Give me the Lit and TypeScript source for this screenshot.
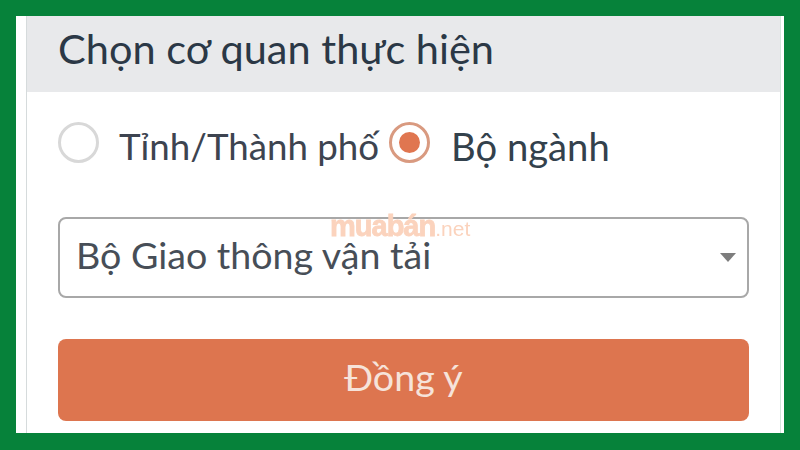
import { LitElement, html, css } from "lit";
import { customElement } from "lit/decorators.js";

@customElement("app-root")
export class AppRoot extends LitElement {
  static styles = css`
    :host { display: block; width: 800px; height: 450px; }
    .frame { box-sizing: border-box; width: 800px; height: 450px; background: #fff; border: solid #06823a; border-width: 16px 16px 17px 16px; display: flex; padding: 0 3px 0 10px; font-family: "Lato", sans-serif; position: relative; }
    .panel { flex: 1; display: flex; flex-direction: column; color: #3d4450; border-left: 1px solid #d6dbdc; border-right: 1px solid #d5e6dc; }
    .head { height: 76px; background: #e8e9eb; display: flex; align-items: center; padding: 0 0 13px 31px; font-size: 41.5px; color: #2b3846; box-sizing: border-box; }
    .body { padding: 0 31px; flex: 1; display: flex; flex-direction: column; }
    .radios { display: flex; align-items: center; margin-top: 30px; height: 41px; font-size: 36.7px; }
    .radio { width: 41px; height: 41px; box-sizing: border-box; border-radius: 50%; border: 3px solid #d8d8d8; flex: none; background: #fff; }
    .radio.on { border-color: #d99a80; display: flex; align-items: center; justify-content: center; }
    .radio.on::after { content: ""; width: 21px; height: 21px; border-radius: 50%; background: #e07650; }
    .l1 { margin-left: 20px; margin-right: 10px; padding-top: 7px; }
    .l2 { margin-left: 21px; font-size: 38.2px; color: #33414c; padding-top: 7px; }
    .select { margin-top: 54px; height: 81px; box-sizing: border-box; border: 2.5px solid #a8a8a8; border-radius: 8px; display: flex; align-items: center; padding: 0 11px 6px 16px; font-size: 37.6px; justify-content: space-between; color: #474e57; }
    .select-text { line-height: 36px; }
    .caret { width: 0; height: 0; margin-top: 6px; border-left: 8px solid transparent; border-right: 8px solid transparent; border-top: 9px solid #7d7d7d; }
    .btn { margin-top: 41px; height: 82px; background: #dd754f; border-radius: 8px; color: #f6e3da; font-size: 37.6px; display: flex; align-items: center; justify-content: center; box-sizing: border-box; padding-bottom: 7px; }
    .mark { position: absolute; left: 314px; top: 198px; line-height: 24px; font-family: "Liberation Sans", sans-serif; color: #fbd3bd; font-weight: 700; font-size: 29px; letter-spacing: -1px; white-space: nowrap; filter: blur(0.6px); -webkit-text-stroke: 0.8px #fbd3bd; }
    .mark small { font-size: 21px; font-weight: 400; letter-spacing: 0; -webkit-text-stroke: 0; }
  `;
  render() {
    return html`<div class="frame">
      <div class="panel">
        <div class="head">Chọn cơ quan thực hiện</div>
        <div class="body">
          <div class="radios">
            <span class="radio"></span><span class="l1">Tỉnh/Thành phố</span>
            <span class="radio on"></span><span class="l2">Bộ ngành</span>
          </div>
          <div class="select"><span class="select-text">Bộ Giao thông vận tải</span><span class="caret"></span></div>
          <div class="btn">Đồng ý</div>
        </div>
      </div>
      <div class="mark">muabán<small>.net</small></div>
    </div>`;
  }
}
